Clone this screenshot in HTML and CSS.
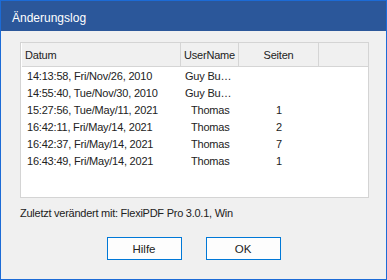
FILE: index.html
```html
<!DOCTYPE html>
<html>
<head>
    <title>Änderungslog</title>
    <link rel="stylesheet" href="styles.css">
</head>
<body>
    <div class="dialog">
        <div class="titlebar">Änderungslog</div>

        <div class="dialog-body">
            <div class="log-list">
                <div class="log-head">
                    <span class="col-date">Datum</span>
                    <span class="col-user">UserName</span>
                    <span class="col-pages">Seiten</span>
                    <span class="col-rest"></span>
                </div>
                <div class="log-rows">
                    <div class="log-row">
                        <span class="col-date">14:13:58, Fri/Nov/26, 2010</span>
                        <span class="col-user">Guy Bu…</span>
                        <span class="col-pages"></span>
                    </div>
                    <div class="log-row">
                        <span class="col-date">14:55:40, Tue/Nov/30, 2010</span>
                        <span class="col-user">Guy Bu…</span>
                        <span class="col-pages"></span>
                    </div>
                    <div class="log-row">
                        <span class="col-date">15:27:56, Tue/May/11, 2021</span>
                        <span class="col-user indent">Thomas</span>
                        <span class="col-pages">1</span>
                    </div>
                    <div class="log-row">
                        <span class="col-date">16:42:11, Fri/May/14, 2021</span>
                        <span class="col-user indent">Thomas</span>
                        <span class="col-pages">2</span>
                    </div>
                    <div class="log-row">
                        <span class="col-date">16:42:37, Fri/May/14, 2021</span>
                        <span class="col-user indent">Thomas</span>
                        <span class="col-pages">7</span>
                    </div>
                    <div class="log-row">
                        <span class="col-date">16:43:49, Fri/May/14, 2021</span>
                        <span class="col-user indent">Thomas</span>
                        <span class="col-pages">1</span>
                    </div>
                </div>
            </div>

            <p class="status">Zuletzt verändert mit: FlexiPDF Pro 3.0.1, Win</p>

            <div class="buttons">
                <button>Hilfe</button>
                <button>OK</button>
            </div>
        </div>
    </div>
</body>
</html>
```

FILE: styles.css
```css
html, body {
    margin: 0;
    padding: 0;
    font-family: 'Liberation Sans', Arial, sans-serif;
    font-size: 11px;
    letter-spacing: -0.2px;
    color: #222;
}

.dialog {
    width: 387px;
    height: 280px;
    box-sizing: border-box;
    border: 1px solid #1c6bd6;
    background-color: #f0f0f0;
    display: flex;
    flex-direction: column;
}

.titlebar {
    height: 30px;
    box-sizing: border-box;
    background-color: #2b579a;
    color: #fff;
    padding: 4px 0 0 11px;
    line-height: 26px;
    font-size: 12px;
    letter-spacing: 0;
}

.dialog-body {
    padding: 11px 17px 0 19px;
}

.log-list {
    height: 156px;
    box-sizing: border-box;
    border: 1px solid #d4d4d4;
    padding: 0 0 0 1px;
    background-color: #fff;
    white-space: nowrap;
}

.log-head {
    display: grid;
    grid-template-columns: 159px 58px 80px 1fr;
    height: 23px;
    background-color: #f0f0f0;
    border-bottom: 1px solid #d5d5d5;
}

.log-head span {
    border-right: 1px solid #d5d5d5;
    line-height: 24px;
    padding-left: 3px;
}

.log-head .col-pages {
    text-align: center;
    padding-left: 0;
}

.log-head .col-rest {
    border-right: none;
}

.log-rows {
    padding-top: 1px;
}

.log-row {
    display: grid;
    grid-template-columns: 159px 58px 80px;
    height: 17px;
    line-height: 17px;
}

.log-row .col-date {
    padding-left: 5px;
}

.log-row .col-user {
    padding-left: 4px;
}

.log-row .col-user.indent {
    padding-left: 10px;
}

.log-row .col-pages {
    text-align: center;
}

.status {
    margin: 7px 0 0 0;
    line-height: 16px;
    letter-spacing: -0.25px;
}

.buttons {
    display: flex;
    justify-content: center;
    gap: 24px;
    margin-top: 16px;
    margin-left: -2px;
}

button {
    width: 75px;
    height: 23px;
    border: 1px solid #0078d7;
    background-color: #fdfdfd;
    font-family: inherit;
    font-size: 11.5px;
    letter-spacing: 0;
    color: #222;
    padding: 0;
}
```
